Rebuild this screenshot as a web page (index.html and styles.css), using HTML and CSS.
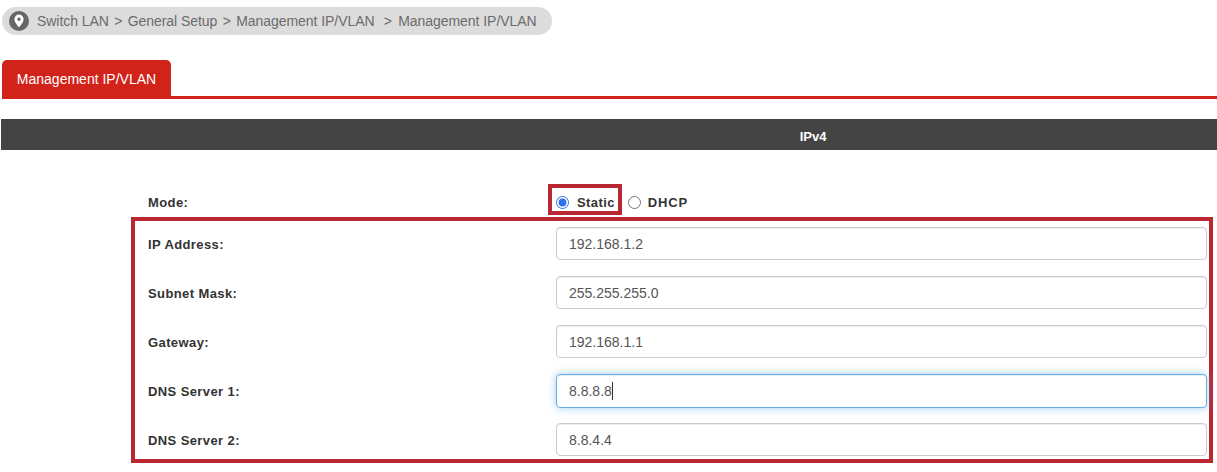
FILE: index.html
```html
<!DOCTYPE html>
<html lang="en">
<head>
<meta charset="utf-8">
<title>Management IP/VLAN</title>
<link rel="stylesheet" href="styles.css">
</head>
<body>
<nav class="crumbs">
  <span class="pin"><svg viewBox="0 0 20 20" width="20" height="20"><circle cx="10" cy="10" r="10" fill="#666"/><path fill-rule="evenodd" fill="#fff" d="M10 3.6a4.6 4.6 0 0 0-4.6 4.6c0 3.2 4.6 8.2 4.6 8.2s4.6-5 4.6-8.2A4.6 4.6 0 0 0 10 3.6zm0 3a1.7 1.7 0 1 1 0 3.4 1.7 1.7 0 0 1 0-3.4z"/></svg></span>
  <span class="trail">Switch LAN <span class="sep">&gt;</span> General Setup <span class="sep">&gt;</span> Management IP/VLAN &nbsp;<span class="sep last">&gt;</span> Management IP/VLAN</span>
</nav>
<div class="tabs"><a class="tab">Management IP/VLAN</a></div>
<h2 class="bar">IPv4</h2>
<form class="form">
  <div class="mode">
    <span class="label">Mode:</span>
    <div class="choices">
      <label class="choice highlight"><input type="radio" name="m" checked>Static</label>
      <label class="choice"><input type="radio" name="m">DHCP</label>
    </div>
  </div>
  <div class="group">
    <div class="row"><label class="label">IP Address:</label><div class="field"><input type="text" value="192.168.1.2"></div></div>
    <div class="row"><label class="label">Subnet Mask:</label><div class="field"><input type="text" value="255.255.255.0"></div></div>
    <div class="row"><label class="label">Gateway:</label><div class="field"><input type="text" value="192.168.1.1"></div></div>
    <div class="row tall"><label class="label">DNS Server 1:</label><div class="field"><input class="focused" type="text" value="8.8.8.8"><span class="caret"></span></div></div>
    <div class="row"><label class="label">DNS Server 2:</label><div class="field"><input type="text" value="8.8.4.4"></div></div>
  </div>
</form>
</body>
</html>
```
FILE: styles.css
```css
* { box-sizing: border-box; }
html, body { margin: 0; padding: 0; background: #fff; overflow: hidden; }
body { font-family: "Liberation Sans", Arial, sans-serif; font-size: 14px; color: #333; height: 472px; }

.crumbs { display: flex; align-items: center; width: 550px; height: 28px; margin: 7px 0 0 2px; padding-left: 7px; gap: 8px; background: #dcdcdc; border-radius: 14px; color: #6b6b6b; }
.pin { display: flex; }
.trail { white-space: nowrap; letter-spacing: -.05px; }
.sep { margin: 0 1.5px; }
.sep.last { margin-right: 2.5px; }

.tabs { height: 39px; margin: 25px 0 0 2px; border-bottom: 3px solid #d2231a; }
.tab { display: flex; align-items: center; justify-content: center; width: 169px; height: 39px; padding-bottom: 1px; background: #d2231a; color: #fff; border-radius: 5px 5px 0 0; }

.bar { height: 31px; margin: 20px 0 0 1px; background: #444; color: #fff; font-size: 13px; font-weight: bold; line-height: 35px; text-align: center; padding-left: 408px; }

.form { margin: 34px 4px 0 131px; }
.label { font-size: 13px; font-weight: bold; letter-spacing: .4px; color: #333; }
.mode { display: flex; align-items: center; height: 31px; padding-left: 17px; }
.mode .label { width: 400px; position: relative; top: 3px; }
.choices { display: flex; align-items: center; height: 31px; }
.choice { display: flex; align-items: center; height: 31px; font-size: 13px; font-weight: bold; letter-spacing: .4px; padding: 6px 3px 0 4px; border: 4px solid transparent; }
.choice input { width: 13px; height: 13px; margin: 0 8px 0 0; accent-color: #2f6fed; }
.choice + .choice { padding-left: 2px; letter-spacing: .8px; }
.choice + .choice input { margin-right: 7px; }
.highlight { border-color: #b92733; }

.group { margin-top: 2px; padding: 6px 2px 3px 13px; border: 4px solid #b92733; height: 246px; display: flex; flex-direction: column; gap: 16px; }
.row { display: flex; align-items: center; height: 33px; }
.row.tall { height: 34px; margin-bottom: -1px; }
.row .label { width: 408px; flex: none; padding-top: 1px; }
.field { flex: 1; height: 100%; position: relative; }
.field input { display: block; width: 100%; height: 100%; padding: 0 12px; border: 1px solid #ccc; border-radius: 4px; font: 14px "Liberation Sans", Arial, sans-serif; color: #555; background: #fff; box-shadow: inset 0 1px 1px rgba(0,0,0,.075); outline: none; }
.field input.focused { border-color: #66afe9; box-shadow: inset 0 1px 1px rgba(0,0,0,.075), 0 0 8px rgba(102,175,233,.6); }
.caret { position: absolute; left: 56px; top: 8px; width: 1px; height: 18px; background: #333; }
```
